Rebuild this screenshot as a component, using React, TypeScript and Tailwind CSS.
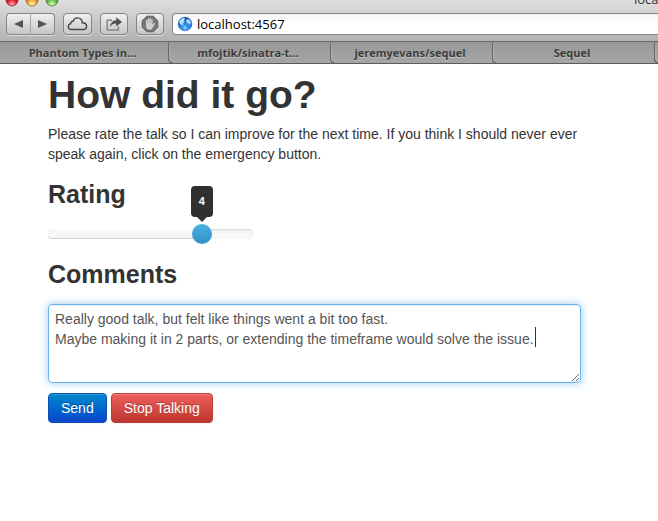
import React, { useState } from "react";

const TABS = ["Phantom Types in...", "mfojtik/sinatra-t...", "jeremyevans/sequel", "Sequel"];

const MIN_RATING = 1;
const MAX_RATING = 5;

const toolButton =
  "flex h-[22px] items-center justify-center rounded-[4px] border border-[#858585] bg-gradient-to-b from-[#f0f0f0] to-[#c6c6c6] shadow-[0_1px_0_rgba(255,255,255,0.5)]";

function TrafficLights() {
  return (
    <svg width="56" height="16" viewBox="0 0 56 16" aria-hidden="true">
      <defs>
        <radialGradient id="red" cx="0.5" cy="0.85" r="0.6">
          <stop offset="0" stopColor="#ffb0b4" />
          <stop offset="0.6" stopColor="#e5293a" />
          <stop offset="1" stopColor="#a50d1c" />
        </radialGradient>
        <radialGradient id="amber" cx="0.5" cy="0.85" r="0.6">
          <stop offset="0" stopColor="#fff6a8" />
          <stop offset="0.6" stopColor="#f3ac3b" />
          <stop offset="1" stopColor="#a8681a" />
        </radialGradient>
        <radialGradient id="green" cx="0.5" cy="0.85" r="0.6">
          <stop offset="0" stopColor="#dcffc2" />
          <stop offset="0.6" stopColor="#72c455" />
          <stop offset="1" stopColor="#3f8329" />
        </radialGradient>
      </defs>
      <circle cx="8" cy="8" r="6" fill="url(#red)" stroke="#8c3038" strokeWidth="0.8" />
      <circle cx="28" cy="8" r="6" fill="url(#amber)" stroke="#8f6526" strokeWidth="0.8" />
      <circle cx="48" cy="8" r="6" fill="url(#green)" stroke="#4b7638" strokeWidth="0.8" />
    </svg>
  );
}

function CloudIcon() {
  return (
    <svg width="21" height="16" viewBox="0 0 21 16" fill="none" stroke="#444" strokeWidth="1.4" aria-hidden="true">
      <path d="M5 13.5 C2.8 13.5 1.3 12.2 1.3 10.4 C1.3 8.9 2.3 7.9 3.7 7.6 C3.5 5.9 4.8 5 6.2 5.4 C6.8 3.2 8.4 1.9 10.6 1.9 C13.5 1.9 15.3 4 15.2 6.8 C17.8 6.6 19.6 8 19.6 10.2 C19.6 12.2 18.2 13.5 16.2 13.5 Z" />
    </svg>
  );
}

function ShareIcon() {
  return (
    <svg width="18" height="16" viewBox="0 0 18 16" aria-hidden="true">
      <path d="M7 4.2 H2.2 V14 H13.4 V10.5" fill="none" stroke="#858585" strokeWidth="1.5" />
      <path d="M5.2 11.2 C5.4 6.8 7.4 4.4 11.2 4.2 V1.2 L17 6 L11.2 10.6 V7.6 C8.4 7.5 6.7 8.6 5.2 11.2 Z" fill="#505050" />
    </svg>
  );
}

function BlockIcon() {
  return (
    <svg width="18" height="18" viewBox="0 0 18 18" aria-hidden="true">
      <path d="M5.8 1.2 H12.2 L16.8 5.8 V12.2 L12.2 16.8 H5.8 L1.2 12.2 V5.8 Z" fill="#787878" stroke="#5c5c5c" />
      <path
        d="M5 9 V5.6 C5 4.7 6.2 4.7 6.3 5.5 L6.8 4 C7 3.1 8.1 3.1 8.3 3.9 C8.6 3 9.9 3.1 10 4 L10.3 4.6 C10.7 3.9 11.7 4.2 11.6 5 L11.4 9.2 L12.9 8.2 C13.7 7.8 14.2 8.4 13.7 9.2 L11.6 12.7 C10.9 14.2 9.9 14.8 8.5 14.8 C6.2 14.8 5 13 5 10.8 Z"
        fill="#cfcfcf"
      />
      <path d="M6.6 5.5 V8 M8.3 4.2 V7.8 M10.1 4.8 V8" stroke="#9a9a9a" strokeWidth="0.5" />
    </svg>
  );
}

function GlobeIcon() {
  return (
    <svg width="16" height="16" viewBox="0 0 16 16" className="shrink-0" aria-hidden="true">
      <defs>
        <radialGradient id="sea" cx="0.5" cy="0.8" r="0.8">
          <stop offset="0" stopColor="#4fb5ff" />
          <stop offset="0.6" stopColor="#1c6fd8" />
          <stop offset="1" stopColor="#12459c" />
        </radialGradient>
      </defs>
      <circle cx="8" cy="8" r="7" fill="url(#sea)" />
      <path d="M2 6.2 C2.8 3.4 5 1.9 7.2 1.8 L8 3.2 L6.8 4.6 L7.6 6 L6 7 L6.4 8.6 L5 9.6 L3.6 8.2 Z" fill="#b5dcfa" />
      <path d="M9.6 3.4 L11.6 3.2 C13 4.2 13.8 5.6 14 7 L12.8 8.8 L11.4 7.6 L9.8 7 L9 5 Z" fill="#a6d4fa" />
      <path d="M6.6 10 L8.8 10.2 L9.6 11.4 L8.8 13.2 L7.6 13.6 L7 12 Z" fill="#8fcafa" />
      <circle cx="8" cy="8" r="6.8" fill="none" stroke="#3a76bd" strokeWidth="0.6" />
    </svg>
  );
}

function TabEdge() {
  return (
    <svg width="8" height="21" viewBox="0 0 8 21" className="absolute top-0 -right-[7px] z-10" fill="none" aria-hidden="true">
      <path d="M-1 0 C0.4 0.4 0.5 1.5 0.5 3 V16 C0.5 19 1.8 20.5 4.5 20.5" stroke="#666" strokeWidth="1.2" />
      <path d="M1.7 3 V16 C1.7 18 2.6 19.2 4.6 19.3" stroke="#bdbdbd" strokeWidth="0.7" />
    </svg>
  );
}

function BrowserChrome() {
  return (
    <header className="-mt-[11px] font-['Open_Sans','Noto_Sans',sans-serif]">
      <div className="border-b border-[#6a6a6a] bg-gradient-to-b from-[#ececec] to-[#b2b2b2] pb-[6px]">
        <div className="flex h-[22px] items-center justify-between pl-1">
          <TrafficLights />
          <div className="w-6 overflow-hidden text-[13px] whitespace-nowrap text-[#333]">localhost:4567</div>
        </div>
        <div className="flex items-center gap-2 pt-[2px] pl-[6px]">
          <div className="flex">
            <button type="button" aria-label="Back" className={`${toolButton} w-[25px] rounded-r-none border-r-[#a5a5a5]`}>
              <svg width="9" height="8" viewBox="0 0 9 8"><path d="M0 4 L9 0 V8 Z" fill="#555" /></svg>
            </button>
            <button type="button" aria-label="Forward" className={`${toolButton} w-6 rounded-l-none border-l-0`}>
              <svg width="9" height="8" viewBox="0 0 9 8"><path d="M9 4 L0 0 V8 Z" fill="#555" /></svg>
            </button>
          </div>
          <button type="button" aria-label="iCloud tabs" className={`${toolButton} w-[29px]`}>
            <CloudIcon />
          </button>
          <button type="button" aria-label="Share" className={`${toolButton} w-[28px]`}>
            <ShareIcon />
          </button>
          <button type="button" aria-label="Block" className={`${toolButton} w-[28px]`}>
            <BlockIcon />
          </button>
          <div className="flex h-[22px] min-w-0 flex-1 items-center gap-1 rounded-l-[4px] border border-r-0 border-[#858585] bg-gradient-to-b from-[#f3f3f3] to-white to-50% pl-1">
            <GlobeIcon />
            <input
              type="text"
              aria-label="Address"
              defaultValue="localhost:4567"
              className="min-w-0 flex-1 bg-transparent text-[13px] leading-5 text-black outline-none"
            />
          </div>
        </div>
      </div>
      <nav className="flex h-[22px] overflow-hidden border-b border-[#5c5c5c] bg-gradient-to-b from-[#999] to-[#a5a5a5]">
        {TABS.map((tab) => (
          <button
            key={tab}
            type="button"
            className="relative w-[162px] shrink-0 pr-1 text-center text-[11px] leading-5 font-bold whitespace-nowrap text-[#3b3b3b] [text-shadow:0_1px_0_rgba(255,255,255,0.4)] first:w-[169px]"
          >
            {tab}
            <TabEdge />
          </button>
        ))}
      </nav>
    </header>
  );
}

function RatingSlider() {
  const [rating, setRating] = useState(4);
  const position = ((rating - MIN_RATING) / (MAX_RATING - MIN_RATING)) * 100;

  return (
    <div className="relative h-[10px] w-[205px] rounded-[4px] bg-gradient-to-b from-[#f3f3f3] to-[#f9f9f9] shadow-[inset_0_1px_2px_rgba(0,0,0,0.1)]">
      <div
        className="h-full rounded-[4px] bg-gradient-to-b from-[#f9f9f9] to-[#f5f5f5] shadow-[inset_0_-1px_0_rgba(0,0,0,0.15)]"
        style={{ width: `${position}%` }}
      />
      {/* The input overhangs the track by the thumb's radius on both sides */}
      <input
        id="rating"
        type="range"
        min={MIN_RATING}
        max={MAX_RATING}
        value={rating}
        onChange={(e) => setRating(Number(e.target.value))}
        className="absolute top-[-5px] left-[-10px] h-5 w-[225px] cursor-pointer appearance-none bg-transparent outline-none [&::-webkit-slider-thumb]:size-5 [&::-webkit-slider-thumb]:appearance-none [&::-webkit-slider-thumb]:rounded-full [&::-webkit-slider-thumb]:bg-gradient-to-b [&::-webkit-slider-thumb]:from-[#49b0e4] [&::-webkit-slider-thumb]:to-[#3391c6]"
      />
      <output
        htmlFor="rating"
        className="absolute bottom-[22px] flex h-[31px] w-[22px] -translate-x-1/2 items-center justify-center rounded-[4px] bg-[#303030] text-[11px] font-bold text-white after:absolute after:top-full after:border-x-[5px] after:border-t-[5px] after:border-x-transparent after:border-t-[#303030]"
        style={{ left: `${position}%` }}
      >
        {rating}
      </output>
    </div>
  );
}

const actionButton =
  "h-[30px] rounded-[4px] border px-3 text-[14px] leading-5 text-white [text-shadow:0_-1px_0_rgba(0,0,0,0.25)] shadow-[inset_0_1px_0_rgba(255,255,255,0.2),0_1px_2px_rgba(0,0,0,0.05)]";

export default function App() {
  const [comments, setComments] = useState(
    "Really good talk, but felt like things went a bit too fast.\nMaybe making it in 2 parts, or extending the timeframe would solve the issue.",
  );

  return (
    <div className="flex min-h-screen flex-col overflow-hidden bg-white font-['Liberation_Sans',Arial,sans-serif] text-[#333]">
      <BrowserChrome />

      <main className="px-12 pt-[11px] pb-10">
        <h1 className="text-[39px] leading-10 font-bold">How did it go?</h1>
        <p className="mt-[9px] text-[14px] leading-5">
          Please rate the talk so I can improve for the next time. If you think I should never ever speak again, click
          on the emergency button.
        </p>

        <form onSubmit={(e) => e.preventDefault()}>
          <h3 className="mt-[10px] mb-[15px] text-[25px] leading-10 font-bold">
            <label htmlFor="rating">Rating</label>
          </h3>
          <RatingSlider />

          <h3 className="mt-[15px] mb-[10px] text-[25px] leading-10 font-bold">
            <label htmlFor="comments">Comments</label>
          </h3>
          <div className="relative max-w-[533px]">
            <textarea
              id="comments"
              value={comments}
              onChange={(e) => setComments(e.target.value)}
              className="block h-[79px] w-full rounded-[4px] border border-[#69b2ea] px-[6px] py-1 text-[14px] leading-5 text-[#555] caret-transparent shadow-[inset_0_1px_1px_rgba(0,0,0,0.075),0_0_8px_rgba(82,168,236,0.6)] outline-none"
            />
            {/* text cursor */}
            <span className="pointer-events-none absolute top-[23px] left-[487px] h-5 w-px bg-[#333]" />
          </div>

          <div className="mt-[10px] flex gap-1">
            <button type="submit" className={`${actionButton} border-[#0f4fb5] bg-gradient-to-b from-[#0088cc] to-[#0f44cc]`}>
              Send
            </button>
            <button type="button" className={`${actionButton} border-[#b93c38] bg-gradient-to-b from-[#ee5f5b] to-[#bd362f]`}>
              Stop Talking
            </button>
          </div>
        </form>
      </main>
    </div>
  );
}
